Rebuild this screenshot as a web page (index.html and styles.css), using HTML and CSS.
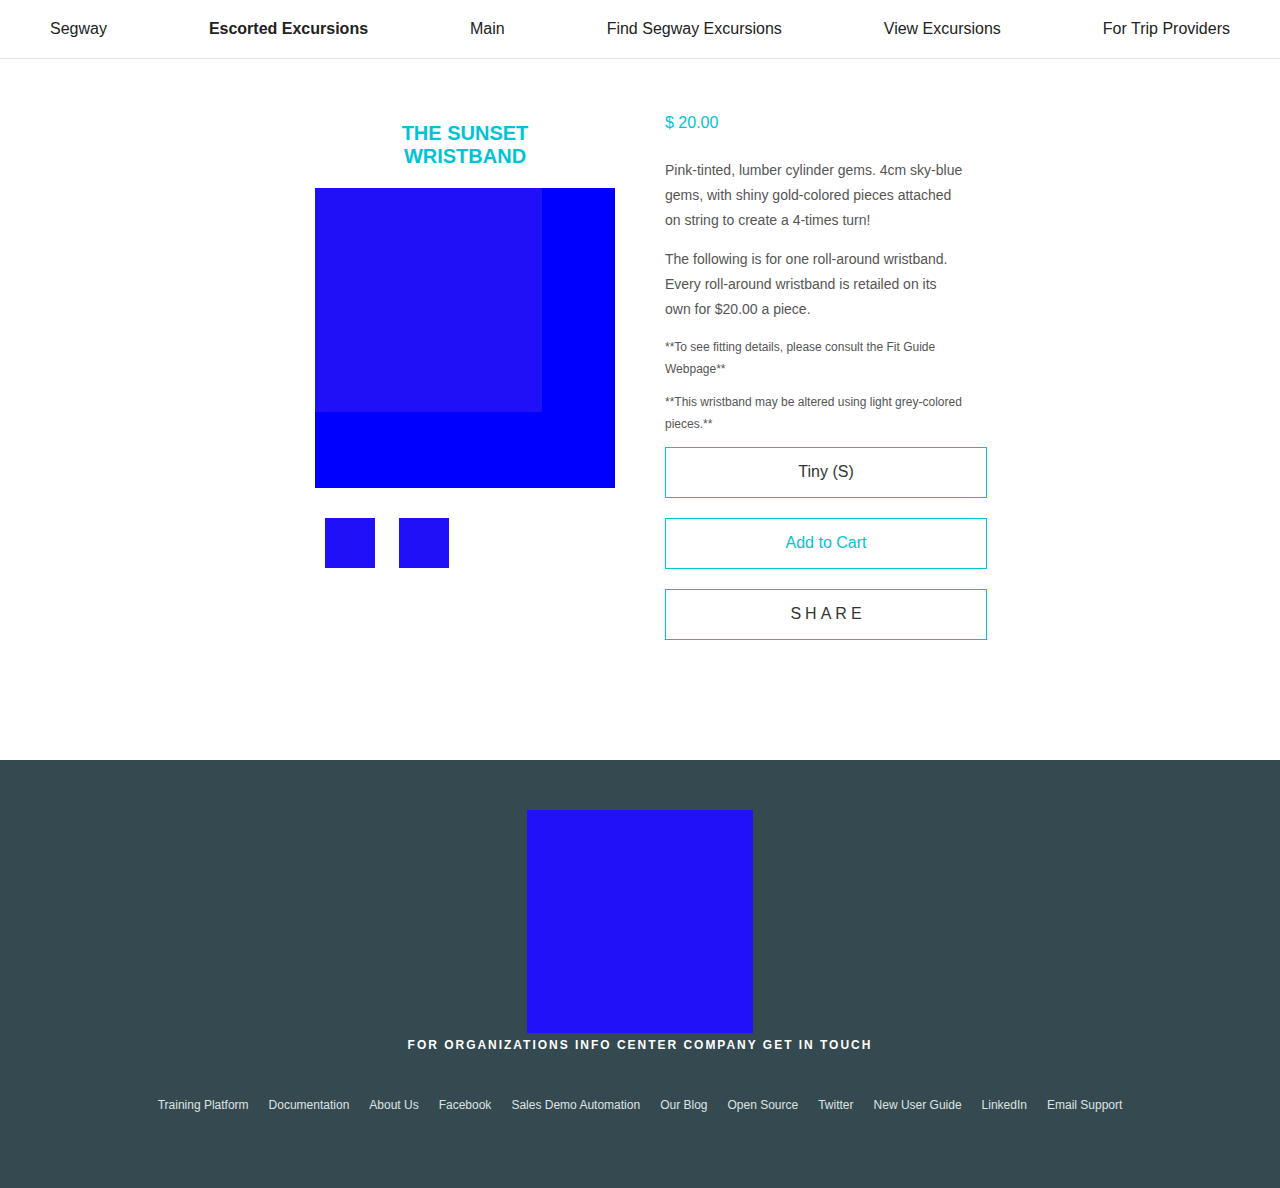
FILE: index.html
```html
<!DOCTYPE html>
<html>
<head>
<meta charset="utf-8">
<link rel="stylesheet" href="styles.css">
</head>
<body>
<nav class="nav">
  <a class="nav-link">Segway</a>
  <a class="nav-link active">Escorted Excursions</a>
  <a class="nav-link">Main</a>
  <a class="nav-link">Find Segway Excursions</a>
  <a class="nav-link">View Excursions</a>
  <a class="nav-link">For Trip Providers</a>
</nav>
<main class="product">
  <section class="gallery">
    <h1 class="title">THE SUNSET<br>WRISTBAND</h1>
    <div class="main-image"><div class="main-image-inner"></div></div>
    <div class="thumbs">
      <div class="thumb"></div>
      <div class="thumb"></div>
    </div>
  </section>
  <section class="details">
    <div class="price">$ 20.00</div>
    <p class="desc">Pink-tinted, lumber cylinder gems. 4cm sky-blue gems, with shiny gold-colored pieces attached on string to create a 4-times turn!</p>
    <p class="desc">The following is for one roll-around wristband. Every roll-around wristband is retailed on its own for $20.00 a piece.</p>
    <p class="note">**To see fitting details, please consult the Fit Guide Webpage**</p>
    <p class="note">**This wristband may be altered using light grey-colored pieces.**</p>
    <div class="btn btn-size">Tiny (S)</div>
    <div class="btn btn-cart">Add to Cart</div>
    <div class="btn btn-share">SHARE</div>
  </section>
</main>
<footer class="footer">
  <div class="logo"></div>
  <div class="footer-heading">FOR ORGANIZATIONS INFO CENTER COMPANY GET IN TOUCH</div>
  <div class="footer-links">
    <a>Training Platform</a>
    <a>Documentation</a>
    <a>About Us</a>
    <a>Facebook</a>
    <a>Sales Demo Automation</a>
    <a>Our Blog</a>
    <a>Open Source</a>
    <a>Twitter</a>
    <a>New User Guide</a>
    <a>LinkedIn</a>
    <a>Email Support</a>
  </div>
</footer>
</body>
</html>
```

FILE: styles.css
```css
* { box-sizing: border-box; }
html, body { margin: 0; padding: 0; }
body {
  font-family: "Liberation Sans", Arial, sans-serif;
  background: #fff;
  color: #222;
}
.nav {
  display: flex;
  justify-content: space-between;
  align-items: center;
  height: 59px;
  padding: 0 50px 1px;
  border-bottom: 1px solid #e8e8e8;
}
.nav-link {
  font-size: 16px;
  color: #222;
  line-height: 18px;
}
.nav-link.active { font-weight: bold; }

.product {
  display: flex;
  gap: 50px;
  width: 694px;
  margin: 0 auto;
  padding: 55px 0 100px 22px;
}
.gallery {
  width: 300px;
  flex: none;
  padding-top: 8px;
}
.title {
  margin: 0 0 20px;
  text-align: center;
  font-size: 20px;
  line-height: 23px;
  font-weight: bold;
  color: #00c4d6;
}
.main-image {
  width: 300px;
  height: 300px;
  background: #0000ff;
}
.main-image-inner {
  width: 227px;
  height: 224px;
  background: #1f10f8;
}
.thumbs {
  display: flex;
  gap: 24px;
  padding: 30px 0 0 10px;
}
.thumb {
  width: 50px;
  height: 50px;
  background: #1f10f8;
}
.details {
  width: 322px;
  flex: none;
}
.price {
  font-size: 16px;
  line-height: 18px;
  color: #00c4d6;
  margin-bottom: 26px;
}
.desc {
  max-width: 299px;
  margin: 0 0 14px;
  font-size: 14px;
  line-height: 25px;
  color: #555;
}
.note {
  max-width: 299px;
  margin: 0 0 11px;
  font-size: 12px;
  line-height: 22px;
  color: #555;
}
.note + .note { margin-bottom: 12px; }
.btn {
  display: flex;
  align-items: center;
  justify-content: center;
  height: 51px;
  padding-bottom: 1px;
  border: 1px solid #00c4d6;
  font-size: 16px;
  color: #333;
  margin-bottom: 20px;
}
.btn-cart { color: #00c4d6; }
.btn-share { letter-spacing: 4px; padding-left: 4px; }

.footer {
  background: #354a50;
  height: 428px;
  padding-top: 50px;
  display: flex;
  flex-direction: column;
  align-items: center;
}
.logo {
  width: 226px;
  height: 223px;
  background: #2011f9;
}
.footer-heading {
  margin-top: 5px;
  font-size: 12px;
  line-height: 14px;
  font-weight: bold;
  color: #fff;
  letter-spacing: 1.98px;
}
.footer-links {
  display: flex;
  gap: 20px;
  margin-top: 46px;
  font-size: 12px;
  line-height: 14px;
  color: #dfe3e4;
}
```
